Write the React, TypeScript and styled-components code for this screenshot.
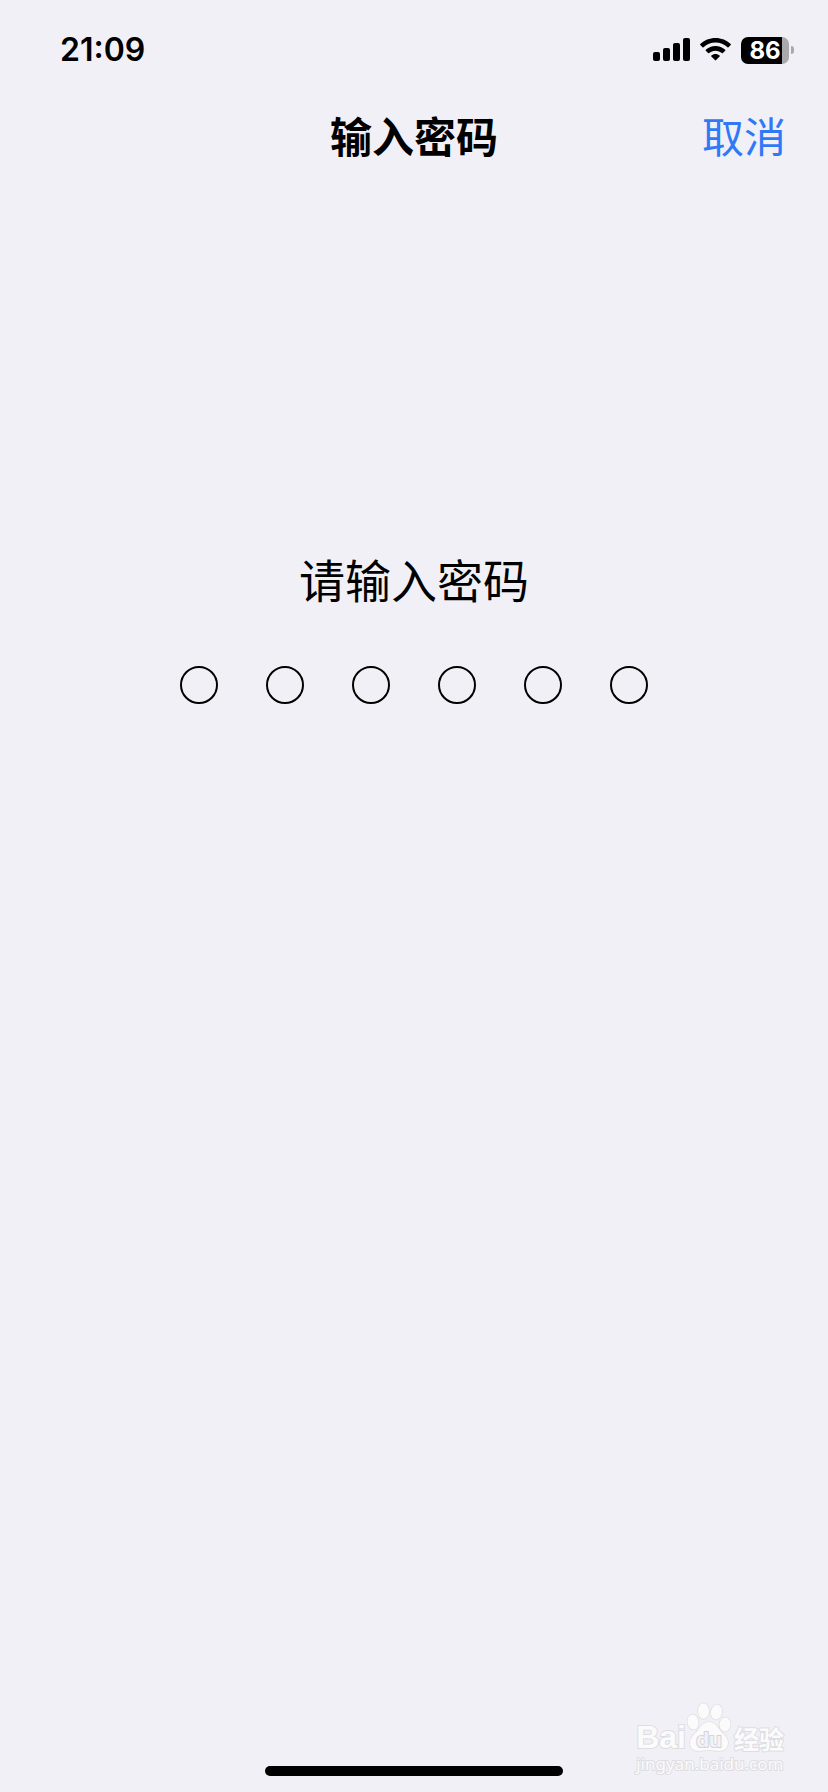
import React, { useRef, useState } from "react";
import styled, { createGlobalStyle } from "styled-components";

const GlobalStyle = createGlobalStyle`
  *, *::before, *::after { box-sizing: border-box; }
  body {
    margin: 0;
    background: #f1f0f6;
    color: #000;
    font-family: Inter, "Noto Sans CJK SC", sans-serif;
  }
`;

const Screen = styled.div`
  position: relative;
  display: flex;
  flex-direction: column;
  min-height: 100vh;
`;

const StatusBar = styled.div`
  display: flex;
  align-items: center;
  justify-content: space-between;
  height: 100px;
  padding: 0 34px 0 60px;
`;

const Time = styled.time`
  font-size: 32px;
  line-height: 40px;
  font-weight: 600;
`;

const StatusIcons = styled.div`
  display: flex;
  align-items: center;
  gap: 10px;
`;

const Battery = styled.div`
  display: flex;
  align-items: center;
  gap: 2px;
`;

const BatteryBody = styled.div<{ $level: number }>`
  width: 48px;
  height: 27px;
  border-radius: 7px;
  background: linear-gradient(
    to right,
    #000 ${(p) => p.$level}%,
    #a9a9ac ${(p) => p.$level}%
  );
  color: #fff;
  font-size: 24px;
  line-height: 27px;
  font-weight: 700;
  text-align: center;
`;

const BatteryTip = styled.div`
  width: 3px;
  height: 8px;
  border-radius: 0 3px 3px 0;
  background: #a9a9ac;
`;

const NavBar = styled.header`
  display: grid;
  grid-template-columns: 1fr auto 1fr;
  align-items: center;
  height: 76px;
  padding: 0 42px;
`;

const Title = styled.h1`
  grid-column: 2;
  margin: 0;
  font-size: 42px;
  line-height: 60px;
  font-weight: 700;
`;

const CancelButton = styled.button`
  justify-self: end;
  padding: 0;
  border: 0;
  background: none;
  color: #3079f6;
  font: inherit;
  font-size: 42px;
  line-height: 60px;
  cursor: pointer;
`;

const PasscodeForm = styled.form`
  flex: 1;
  display: flex;
  flex-direction: column;
  align-items: center;
  gap: 52px;
  padding-top: 372px;
`;

const Prompt = styled.h2`
  margin: 0;
  font-size: 46px;
  line-height: 66px;
  font-weight: 400;
`;

const Dots = styled.div`
  display: flex;
  gap: 48px;
`;

const Dot = styled.input`
  width: 38px;
  height: 38px;
  padding: 0;
  border: 2px solid #000;
  border-radius: 50%;
  outline: none;
  background: ${(p) => (p.value ? "#000" : "transparent")};
  color: transparent;
  caret-color: transparent;
`;

const HomeIndicator = styled.div`
  align-self: center;
  width: 36%;
  height: 10px;
  margin-bottom: 16px;
  border-radius: 5px;
  background: #000;
`;

const Watermark = styled.div`
  position: absolute;
  right: 44px;
  bottom: 16px;
  display: flex;
  flex-direction: column;
  color: #fbfbfc;
  -webkit-text-stroke: 2px #dedde2;
  paint-order: stroke fill;
`;

const WatermarkLogo = styled.div`
  display: flex;
  align-items: flex-end;
  height: 50px;
`;

const LogoLatin = styled.span`
  font-family: "Liberation Sans", sans-serif;
  font-size: 32px;
  line-height: 30px;
  font-weight: 700;
`;

const LogoChinese = styled.span`
  margin-left: 2px;
  font-family: "Liberation Sans", "Noto Sans CJK SC", sans-serif;
  font-size: 25px;
  line-height: 24px;
  font-weight: 700;
`;

const WatermarkSite = styled.span`
  font-family: "Noto Sans", sans-serif;
  font-size: 17px;
  line-height: 24px;
`;

const SignalIcon = () => (
  <svg width="37" height="24" viewBox="0 0 37 24" role="img" aria-label="信号">
    <rect x="0" y="14" width="7" height="9" rx="2" />
    <rect x="10" y="10" width="7" height="13" rx="2" />
    <rect x="20" y="5" width="7" height="18" rx="2" />
    <rect x="30" y="0" width="7" height="23" rx="2" />
  </svg>
);

const WifiIcon = () => (
  <svg width="31" height="24" viewBox="0 0 31 24" role="img" aria-label="无线网络">
    <path d="M15.5 0C9.6 0 4.2 2.3.3 6.100q-.5.5 0 1l2.200 2.200q.5.4 1 0C6.700 6.300 10.900 4.600 15.500 4.600s8.800 1.700 12 4.700q.5.4 1 0l2.200-2.200q.5-.5 0-1C26.800 2.300 21.400 0 15.500 0Z" />
    <path d="M15.500 8.100c-3.700 0-7.100 1.400-9.700 3.700q-.5.500 0 1l2.300 2.300q.5.400 1 0c1.700-1.500 3.900-2.400 6.400-2.400s4.700.9 6.400 2.400q.5.400 1 0l2.300-2.300q.5-.5 0-1c-2.600-2.300-6-3.700-9.700-3.700Z" />
    <path d="M15.500 16c-1.600 0-3 .6-4.100 1.500q-.6.500 0 1.100l3.500 3.500q.6.600 1.200 0l3.500-3.500q.6-.6 0-1.100c-1.100-.9-2.500-1.500-4.100-1.500Z" />
  </svg>
);

const PawIcon = () => (
  <svg width="46" height="50" viewBox="0 0 46 50" aria-hidden="true">
    <g fill="#fbfbfc" stroke="#dedde2" strokeWidth="1.500">
      <ellipse cx="7" cy="20" rx="5.500" ry="7.500" transform="rotate(-8 7 20)" />
      <ellipse cx="17.500" cy="9" rx="5.500" ry="7.800" />
      <ellipse cx="30.500" cy="10" rx="5.500" ry="7.500" transform="rotate(12 30.500 10)" />
      <ellipse cx="39" cy="22.500" rx="5.500" ry="7" transform="rotate(8 39 22.500)" />
      <path d="M23 20c-5 0-7.500 3-10 7C10 31 4 35 4 41c0 5 3.500 8 8.500 8 3.500 0 6.500-1 10.500-1s6.500 1 10.500 1c5 0 8.500-3.500 8.500-8.500 0-6-6-9.500-9-13.500-2.500-4-5-7-10-7Z" />
    </g>
    <text
      x="23"
      y="45"
      textAnchor="middle"
      fontFamily="Liberation Sans, sans-serif"
      fontSize="21"
      fontWeight="700"
      fill="#f3f2f7"
      stroke="#d4d3d9"
      strokeWidth="2"
    >
      du
    </text>
  </svg>
);

const PASSCODE_LENGTH = 6;

export default function App() {
  const [digits, setDigits] = useState<string[]>(Array(PASSCODE_LENGTH).fill(""));
  const inputs = useRef<(HTMLInputElement | null)[]>([]);

  const enterDigit = (index: number, value: string) => {
    const digit = value.replace(/\D/g, "").slice(-1);
    setDigits((current) => current.map((d, i) => (i === index ? digit : d)));
    if (digit) inputs.current[index + 1]?.focus();
  };

  const clear = () => setDigits(Array(PASSCODE_LENGTH).fill(""));

  return (
    <>
      <GlobalStyle />
      <Screen>
        <StatusBar>
          <Time>21:09</Time>
          <StatusIcons>
            <SignalIcon />
            <WifiIcon />
            <Battery>
              <BatteryBody $level={86}>86</BatteryBody>
              <BatteryTip />
            </Battery>
          </StatusIcons>
        </StatusBar>
        <NavBar>
          <Title>输入密码</Title>
          <CancelButton type="button" onClick={clear}>
            取消
          </CancelButton>
        </NavBar>
        <PasscodeForm>
          <Prompt id="prompt">请输入密码</Prompt>
          <Dots role="group" aria-labelledby="prompt">
            {digits.map((digit, i) => (
              <Dot
                key={i}
                ref={(el) => {
                  inputs.current[i] = el;
                }}
                type="password"
                inputMode="numeric"
                autoComplete="off"
                aria-label={`第 ${i + 1} 位`}
                value={digit}
                onChange={(e) => enterDigit(i, e.target.value)}
              />
            ))}
          </Dots>
        </PasscodeForm>
        <HomeIndicator />
        <Watermark>
          <WatermarkLogo>
            <LogoLatin>Bai</LogoLatin>
            <PawIcon />
            <LogoChinese>经验</LogoChinese>
          </WatermarkLogo>
          <WatermarkSite>jingyan.baidu.com</WatermarkSite>
        </Watermark>
      </Screen>
    </>
  );
}
